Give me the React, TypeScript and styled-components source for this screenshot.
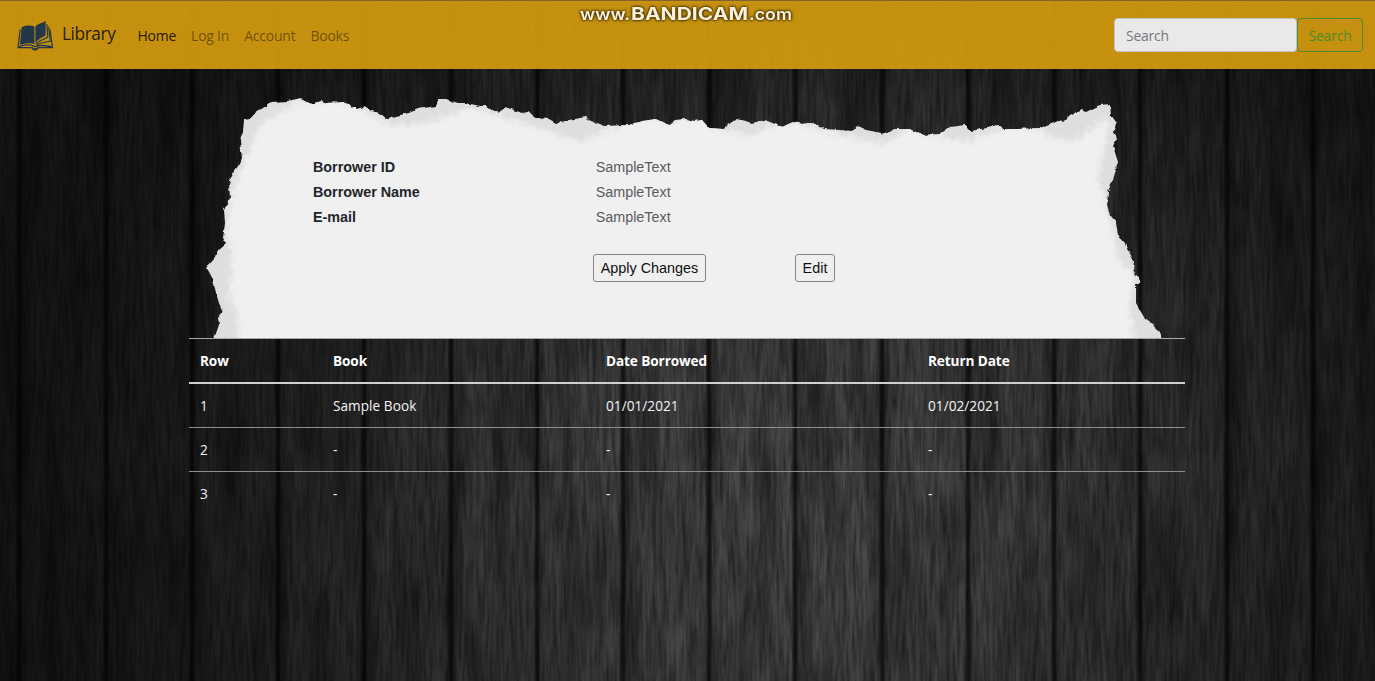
import React from "react";
import styled, { createGlobalStyle } from "styled-components";

const GlobalStyle = createGlobalStyle`
  *, *::before, *::after { box-sizing: border-box; }
  html, body { margin: 0; padding: 0; background: #161617; overflow: hidden; }
`;

const Page = styled.div`
  position: relative;
  width: 100%;
  height: 681px;
  overflow: hidden;
  isolation: isolate;
  font-family: "Open Sans", "Noto Sans", sans-serif;
  font-size: 14px;
`;

const WoodLayer = styled.svg`
  position: absolute;
  inset: 0;
  z-index: -1;
  display: block;
`;

const Navbar = styled.nav`
  position: relative;
  display: flex;
  align-items: center;
  height: 69px;
  padding: 0 12px 0 17px;
  border-top: 1px solid #80622c;
  background: rgba(216, 159, 14, 0.9);
`;

const Brand = styled.a`
  display: flex;
  align-items: center;
  gap: 8px;
  margin-right: 22px;
  color: rgba(0, 0, 0, 0.82);
  font-size: 17.3px;
  line-height: 24px;
  letter-spacing: -0.42px;
`;

const BrandName = styled.span`
  margin-top: -3px;
`;

const NavLinks = styled.div`
  display: flex;
  gap: 15px;
  flex: 1;
  padding-top: 2px;
`;

const NavLink = styled.a<{ $active?: boolean }>`
  color: ${(p) => (p.$active ? "rgba(0, 0, 0, 0.84)" : "rgba(0, 0, 0, 0.46)")};
  font-size: 14px;
  line-height: 20px;
  letter-spacing: -0.23px;
`;

const SearchForm = styled.form`
  display: flex;
  height: 34px;
`;

const SearchInput = styled.input`
  width: 183px;
  padding: 1px 11px 0;
  border: 1px solid #c5c3c8;
  border-radius: 4px;
  background: rgba(234, 234, 237, 0.99);
  font: 14px "Open Sans", "Noto Sans", sans-serif;
  letter-spacing: -0.25px;
  &::placeholder { color: #75777d; opacity: 1; }
`;

const SearchButton = styled.button`
  width: 66px;
  padding: 1px 0 0;
  border: 1px solid #4f8a32;
  border-radius: 4px;
  background: transparent;
  color: #4f8a2c;
  font: 14px "Open Sans", "Noto Sans", sans-serif;
  letter-spacing: -0.2px;
`;

const Watermark = styled.svg`
  position: absolute;
  left: 574px;
  top: 0;
  filter: drop-shadow(0 0 1px #3d2c04) drop-shadow(0 0 1.5px #3d2c04);
`;

const Content = styled.main`
  width: 996px;
  margin: 0 auto 0 189px;
`;

const Paper = styled.section`
  position: relative;
  height: 269px;
  padding: 85px 0 0 124px;
  isolation: isolate;
  font-family: "Liberation Sans", Arial, sans-serif;
  font-size: 14.35px;
`;

const PaperShape = styled.svg`
  position: absolute;
  inset: 0;
  z-index: -1;
`;

const Fields = styled.dl`
  display: grid;
  grid-template-columns: 282.7px 1fr;
  grid-auto-rows: 25px;
  align-items: center;
  margin: 0;
`;

const FieldName = styled.dt`
  color: #212529;
  font-weight: 700;
`;

const FieldValue = styled.dd`
  margin: 0;
  color: #5a5b5d;
`;

const Actions = styled.div`
  display: flex;
  gap: 89px;
  margin: 25px 0 0 280px;
`;

const ActionButton = styled.button<{ $width: number }>`
  width: ${(p) => p.$width}px;
  height: 28px;
  padding: 0;
  border: 1px solid #858585;
  border-radius: 3px;
  background: #f0eff0;
  color: #111;
  font: 14.4px "Liberation Sans", Arial, sans-serif;
`;

const LoanTable = styled.table`
  width: 996px;
  table-layout: fixed;
  border-collapse: separate;
  border-spacing: 0;
  color: #f4f4f4;
`;

const HeadCell = styled.th<{ $width: number }>`
  width: ${(p) => p.$width}px;
  height: 46px;
  padding: 0 11px;
  border-top: 1px solid #a9a9ab;
  border-bottom: 2px solid #cfcfd4;
  color: #fff;
  font-size: 13.6px;
  font-weight: 700;
  line-height: 20px;
  letter-spacing: -0.1px;
  text-align: left;
`;

const Cell = styled.td`
  height: 44px;
  padding: 0 11px 1px;
  border-bottom: 1px solid #8e8e8f;
  font-size: 13.6px;
  letter-spacing: 0.05px;
  tr:last-child > & { border-bottom: 0; height: 43px; }
`;

const SEAMS = [19, 106, 192, 278, 364, 451, 537, 623, 709, 795, 882, 968, 1054, 1140, 1227, 1313];

const Wood = () => (
  <WoodLayer width="1375" height="681" viewBox="0 0 1375 681">
    <defs>
      <radialGradient id="glow" gradientUnits="userSpaceOnUse" cx="0" cy="0" r="1" gradientTransform="translate(800 500) scale(800 760)">
        <stop offset="0" stopColor="#4b4b4b" />
        <stop offset="0.25" stopColor="#454545" />
        <stop offset="0.41" stopColor="#393939" />
        <stop offset="0.6" stopColor="#292929" />
        <stop offset="0.8" stopColor="#1d1d1d" />
        <stop offset="1" stopColor="#161617" />
      </radialGradient>
      <linearGradient id="seam" x1="0" x2="1" y1="0" y2="0">
        <stop offset="0" stopColor="#000" stopOpacity="0" />
        <stop offset="0.22" stopColor="#000" stopOpacity="0.65" />
        <stop offset="0.34" stopColor="#000" stopOpacity="0.65" />
        <stop offset="0.5" stopColor="#000" stopOpacity="0.2" />
        <stop offset="1" stopColor="#000" stopOpacity="0" />
      </linearGradient>
      <filter id="fineGrain" x="0" y="0" width="100%" height="100%" colorInterpolationFilters="sRGB">
        <feTurbulence type="fractalNoise" baseFrequency="0.3 0.024" numOctaves="3" seed="7" />
        <feColorMatrix values="0.8 0 0 0 0.42  0.8 0 0 0 0.42  0.8 0 0 0 0.42  0 0 0 0 1" />
      </filter>
      <filter id="broadGrain" x="0" y="0" width="100%" height="100%" colorInterpolationFilters="sRGB">
        <feTurbulence type="fractalNoise" baseFrequency="0.045 0.006" numOctaves="2" seed="12" />
        <feColorMatrix values="0.8 0 0 0 0.5  0.8 0 0 0 0.5  0.8 0 0 0 0.5  0 0 0 0 1" />
      </filter>
    </defs>
    <rect width="1375" height="681" fill="url(#glow)" />
    <rect width="1375" height="681" filter="url(#fineGrain)" style={{ mixBlendMode: "multiply" }} />
    <rect width="1375" height="681" filter="url(#broadGrain)" style={{ mixBlendMode: "multiply" }} />
    {SEAMS.map((x) => (
      <rect key={x} x={x - 4} y="0" width="15" height="681" fill="url(#seam)" />
    ))}
  </WoodLayer>
);

const OUTLINE =
  "214,339 219,325 218,318 223,312 219,303 216,293 213,279 206,268 216,257 218,250 226,243 223,238 225,223 224,210 230,198 229,183 234,172 240,163 242,158 240,141 243,132 244,120 250,119 256,112 263,108 272,102 288,101 301,98 306,103 310,104 322,101 327,103 344,102 357,109 364,107 372,111 381,114 388,120 396,116 409,113 418,109 436,106 439,99 446,99 458,103 466,103 480,106 486,106 498,113 506,107 522,113 528,112 537,118 549,119 556,123 570,120 585,117 592,121 605,126 629,125 642,121 657,119 669,125 675,120 686,119 694,121 702,120 709,128 724,129 727,124 737,119 752,123 765,120 782,127 793,122 803,124 812,122 825,129 853,131 857,126 866,130 887,134 894,129 909,129 923,135 940,134 950,127 965,125 971,131 987,128 997,125 1002,129 1018,129 1040,128 1058,121 1063,122 1069,116 1082,109 1086,112 1100,105 1110,104 1111,115 1116,122 1114,131 1117,138 1113,146 1118,162 1113,180 1108,191 1107,205 1110,215 1116,222 1118,235 1125,243 1128,250 1134,261 1133,270 1141,282 1136,284 1136,303 1145,319 1157,328 1162,339";

const FACE =
  "238,350 238,312 229,300 231,270 233,248 227,238 227,222 231,200 236,182 243,165 250,150 256,130 268,118 286,110 298,99 305,102 340,100 360,109 372,115 385,123 398,126 430,122 450,115 468,107 485,110 500,116 530,126 555,133 580,142 600,134 618,125 640,119 657,117 672,123 686,117 704,118 712,126 725,130 735,133 755,135 770,126 790,121 825,131 850,137 885,144 900,135 910,127 925,134 938,135 950,139 968,141 985,133 1015,126 1040,130 1055,138 1073,141 1090,130 1107,117 1109,125 1106,145 1100,165 1098,185 1105,192 1108,210 1113,230 1116,250 1120,262 1133,272 1133,285 1129,310 1134,330 1137,350";

const TornPaper = () => (
  <PaperShape width="996" height="269" viewBox="189 69 996 269">
    <defs>
      <filter id="tear" x="-2%" y="-5%" width="104%" height="110%">
        <feTurbulence type="fractalNoise" baseFrequency="0.16" numOctaves="2" seed="4" />
        <feDisplacementMap in="SourceGraphic" scale="4" xChannelSelector="R" yChannelSelector="G" />
        <feGaussianBlur stdDeviation="0.6" />
      </filter>
      <filter id="fibre" x="-2%" y="-5%" width="104%" height="110%">
        <feTurbulence type="fractalNoise" baseFrequency="0.2" numOctaves="3" seed="9" result="n" />
        <feGaussianBlur in="SourceGraphic" stdDeviation="2.5" result="soft" />
        <feDisplacementMap in="soft" in2="n" scale="13" xChannelSelector="R" yChannelSelector="G" />
        <feGaussianBlur stdDeviation="0.9" />
      </filter>
    </defs>
    <g filter="url(#tear)">
      <clipPath id="sheet">
        <polygon points={OUTLINE} />
      </clipPath>
      <polygon points={OUTLINE} fill="#dedede" />
      <g clipPath="url(#sheet)">
        <polygon points={FACE} fill="#f0f0f1" filter="url(#fibre)" />
      </g>
    </g>
    <rect x="265" y="150" width="825" height="190" fill="#f0f0f1" />
  </PaperShape>
);

const BookLogo = () => (
  <svg width="37" height="31" viewBox="0 0 37 31" fill="none">
    <path d="M4.6 7.2C8 5.6 13 4.8 17.4 6.6V24C13 22.4 7.6 23.4 3 24.8Z" fill="#233748" />
    <path d="M18.4 6.6C21 3.4 25 3.6 28.6 .8V14.6C27.4 18 21 17.8 18.4 23.6Z" fill="#233748" />
    <path d="M3.2 9.4 1 27.6H15c1 0 1.2 1.8 3 1.8s2-1.8 3-1.8H35.5L33 9.4" stroke="#233748" strokeWidth="1.2" />
    <path d="M1.7 26.8C7 24.6 14 24 18 26.6 22.5 24.4 29 25.6 34.5 26.8" stroke="#233748" strokeWidth="1.4" />
    <path d="M29.9 4.2 30.8 16.6C28.4 20.2 21.5 19.6 19 24.4" stroke="#233748" strokeWidth="1.2" />
    <path d="M31.6 6.8 33.2 21.2C28.5 22.8 23.5 21.8 20 25" stroke="#233748" strokeWidth="1.1" />
    <path d="M14.2 28.2H21.8C20.9 29.1 20.3 30.5 18 30.5S15.1 29.1 14.2 28.2Z" fill="#233748" />
  </svg>
);

const LOANS = [
  ["1", "Sample Book", "01/01/2021", "01/02/2021"],
  ["2", "-", "-", "-"],
  ["3", "-", "-", "-"],
];

const COLUMNS: [string, number][] = [
  ["Row", 133],
  ["Book", 273],
  ["Date Borrowed", 322],
  ["Return Date", 268],
];

export default function App() {
  return (
    <Page>
      <GlobalStyle />
      <Wood />
      <Navbar>
        <Brand>
          <BookLogo />
          <BrandName>Library</BrandName>
        </Brand>
        <NavLinks>
          <NavLink $active>Home</NavLink>
          <NavLink>Log In</NavLink>
          <NavLink>Account</NavLink>
          <NavLink>Books</NavLink>
        </NavLinks>
        <SearchForm>
          <SearchInput placeholder="Search" />
          <SearchButton type="button">Search</SearchButton>
        </SearchForm>
        <Watermark width="226" height="28" fill="#fbf1d8" fontFamily="Inter, sans-serif" fontWeight="700">
          <text x="6" y="19" fontSize="16.5" fontWeight="600" textLength="50" lengthAdjust="spacingAndGlyphs">www.</text>
          <text x="57" y="19.4" fontSize="17.5" textLength="117" lengthAdjust="spacingAndGlyphs">BANDICAM</text>
          <text x="175" y="19" fontSize="16.5" fontWeight="600" textLength="43" lengthAdjust="spacingAndGlyphs">.com</text>
        </Watermark>
      </Navbar>
      <Content>
        <Paper>
          <TornPaper />
          <Fields>
            <FieldName>Borrower ID</FieldName>
            <FieldValue>SampleText</FieldValue>
            <FieldName>Borrower Name</FieldName>
            <FieldValue>SampleText</FieldValue>
            <FieldName>E-mail</FieldName>
            <FieldValue>SampleText</FieldValue>
          </Fields>
          <Actions>
            <ActionButton $width={113}>Apply Changes</ActionButton>
            <ActionButton $width={40}>Edit</ActionButton>
          </Actions>
        </Paper>
        <LoanTable>
          <thead>
            <tr>
              {COLUMNS.map(([label, width]) => (
                <HeadCell key={label} $width={width}>{label}</HeadCell>
              ))}
            </tr>
          </thead>
          <tbody>
            {LOANS.map((row) => (
              <tr key={row[0]}>
                {row.map((value, i) => (
                  <Cell key={i}>{value}</Cell>
                ))}
              </tr>
            ))}
          </tbody>
        </LoanTable>
      </Content>
    </Page>
  );
}
